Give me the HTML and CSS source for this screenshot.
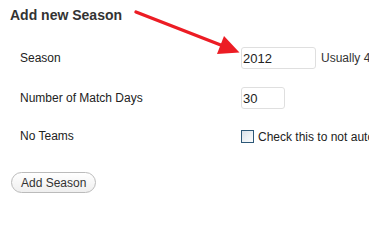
FILE: index.html
```html
<!DOCTYPE html>
<html>
<head>
<meta charset="utf-8">
<link rel="stylesheet" href="styles.css">
</head>
<body>
<div class="wrap">
  <h3 class="title">Add new Season</h3>
  <div class="row">
    <label class="lbl" for="season">Season</label>
    <div class="field"><input id="season" class="txt wide" type="text" value="2012"><span class="desc">Usually 4-digit year</span></div>
  </div>
  <div class="row">
    <label class="lbl" for="days">Number of Match Days</label>
    <div class="field"><input id="days" class="txt narrow" type="text" value="30"></div>
  </div>
  <div class="row row-check">
    <label class="lbl" for="noteams">No Teams</label>
    <div class="field"><input id="noteams" class="chk" type="checkbox"><span class="desc2">Check this to not automatically add teams</span></div>
  </div>
  <button class="btn" type="button">Add Season</button>
  <svg class="arrow" width="369" height="215" viewBox="0 0 369 215">
    <line x1="136" y1="12" x2="222" y2="45.5" stroke="#ec1c24" stroke-width="3.4" stroke-linecap="round"/>
    <polygon points="239.5,52.5 224,36 217,54" fill="#ec1c24"/>
  </svg>
</div>
</body>
</html>
```
FILE: styles.css
```css
html, body {
  margin: 0;
  padding: 0;
  background: #fff;
  overflow: hidden;
}
.wrap {
  position: relative;
  width: 369px;
  height: 215px;
  overflow: hidden;
  padding: 7px 0 0 10px;
  box-sizing: border-box;
  font-family: "Liberation Sans", Arial, sans-serif;
  font-size: 12px;
  color: #222;
  white-space: nowrap;
}
.title {
  margin: 0 0 14px 0;
  font-size: 14px;
  line-height: 17px;
  font-weight: bold;
  color: #333;
}
.row {
  display: grid;
  grid-template-columns: 231px 1fr;
  align-items: center;
  padding: 9px 0;
  min-height: 22px;
}
.row-check {
  min-height: 19px;
}
.lbl {
  padding-left: 10px;
  line-height: 15px;
}
.field {
  display: flex;
  align-items: center;
  min-width: 0;
  overflow: hidden;
}
.txt {
  flex-shrink: 0;
  box-sizing: border-box;
  height: 22px;
  margin: 0;
  padding: 0 1px;
  border: 1px solid #dfdfdf;
  border-radius: 3px;
  background: #fff;
  font-family: "Liberation Sans", Arial, sans-serif;
  font-size: 13px;
  color: #222;
  outline: none;
}
.wide { width: 75px; }
.narrow { width: 44px; }
.desc {
  margin-left: 5px;
  color: #333;
}
.chk {
  -webkit-appearance: none;
  appearance: none;
  flex-shrink: 0;
  box-sizing: border-box;
  width: 13px;
  height: 13px;
  margin: 0;
  border: 1px solid #2d5877;
  background: linear-gradient(135deg, #d8e0e8 0%, #eef2f5 55%, #fbfcfd 100%);
}
.desc2 {
  margin-left: 4px;
  font-size: 12px;
  color: #222;
}
.btn {
  display: block;
  margin: 17px 0 0 1px;
  box-sizing: border-box;
  height: 21px;
  padding: 0 9px;
  border: 1px solid #bbb;
  border-radius: 11px;
  background: linear-gradient(#fff, #efefef);
  font-family: "Liberation Sans", Arial, sans-serif;
  font-size: 12px;
  color: #333;
}
.arrow {
  position: absolute;
  left: 0;
  top: 0;
  pointer-events: none;
}
```
